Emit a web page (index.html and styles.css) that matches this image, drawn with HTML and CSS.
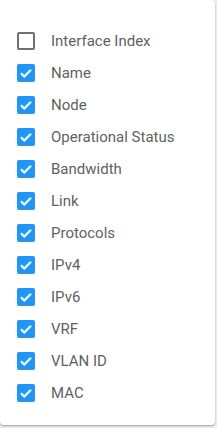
FILE: index.html
```html
<!DOCTYPE html>
<html>
<head>
<meta charset="utf-8">
<link rel="stylesheet" href="styles.css">
</head>
<body>
<div class="menu">
  <ul class="list">
    <li class="item"><span class="box"></span><span class="label">Interface Index</span></li>
    <li class="item"><span class="box checked"><svg viewBox="0 0 18 18"><path d="M4 9.2l3.3 3.3L14 5.8"/></svg></span><span class="label">Name</span></li>
    <li class="item"><span class="box checked"><svg viewBox="0 0 18 18"><path d="M4 9.2l3.3 3.3L14 5.8"/></svg></span><span class="label">Node</span></li>
    <li class="item"><span class="box checked"><svg viewBox="0 0 18 18"><path d="M4 9.2l3.3 3.3L14 5.8"/></svg></span><span class="label">Operational Status</span></li>
    <li class="item"><span class="box checked"><svg viewBox="0 0 18 18"><path d="M4 9.2l3.3 3.3L14 5.8"/></svg></span><span class="label">Bandwidth</span></li>
    <li class="item"><span class="box checked"><svg viewBox="0 0 18 18"><path d="M4 9.2l3.3 3.3L14 5.8"/></svg></span><span class="label">Link</span></li>
    <li class="item"><span class="box checked"><svg viewBox="0 0 18 18"><path d="M4 9.2l3.3 3.3L14 5.8"/></svg></span><span class="label">Protocols</span></li>
    <li class="item"><span class="box checked"><svg viewBox="0 0 18 18"><path d="M4 9.2l3.3 3.3L14 5.8"/></svg></span><span class="label">IPv4</span></li>
    <li class="item"><span class="box checked"><svg viewBox="0 0 18 18"><path d="M4 9.2l3.3 3.3L14 5.8"/></svg></span><span class="label">IPv6</span></li>
    <li class="item"><span class="box checked"><svg viewBox="0 0 18 18"><path d="M4 9.2l3.3 3.3L14 5.8"/></svg></span><span class="label">VRF</span></li>
    <li class="item"><span class="box checked"><svg viewBox="0 0 18 18"><path d="M4 9.2l3.3 3.3L14 5.8"/></svg></span><span class="label">VLAN ID</span></li>
    <li class="item"><span class="box checked"><svg viewBox="0 0 18 18"><path d="M4 9.2l3.3 3.3L14 5.8"/></svg></span><span class="label">MAC</span></li>
  </ul>
</div>
</body>
</html>
```
FILE: styles.css
```css
html, body {
  margin: 0;
  padding: 0;
  background: #f2f2f2;
}
body {
  width: 217px;
  height: 428px;
  overflow: hidden;
  font-family: Roboto, "Liberation Sans", sans-serif;
}
.menu {
  width: 215px;
  height: 425px;
  box-sizing: border-box;
  background: #fff;
  border-radius: 0 4px 4px 4px;
  box-shadow: 0 1px 3px rgba(0,0,0,0.25), 0 1px 1px rgba(0,0,0,0.12);
  padding: 25px 0 0 0;
}
.list {
  list-style: none;
  margin: 0;
  padding: 0;
}
.item {
  height: 32px;
  display: flex;
  align-items: center;
  padding-left: 17px;
}
.box {
  width: 18px;
  height: 18px;
  box-sizing: border-box;
  border: 2px solid #707070;
  border-radius: 2px;
  flex: none;
  display: flex;
}
.box.checked {
  background: #2196f3;
  border: none;
}
.box svg {
  width: 18px;
  height: 18px;
}
.box path {
  fill: none;
  stroke: #fff;
  stroke-width: 2.2;
}
.label {
  margin-left: 16px;
  font-size: 15px;
  color: #5f5f5f;
  white-space: nowrap;
}
```
